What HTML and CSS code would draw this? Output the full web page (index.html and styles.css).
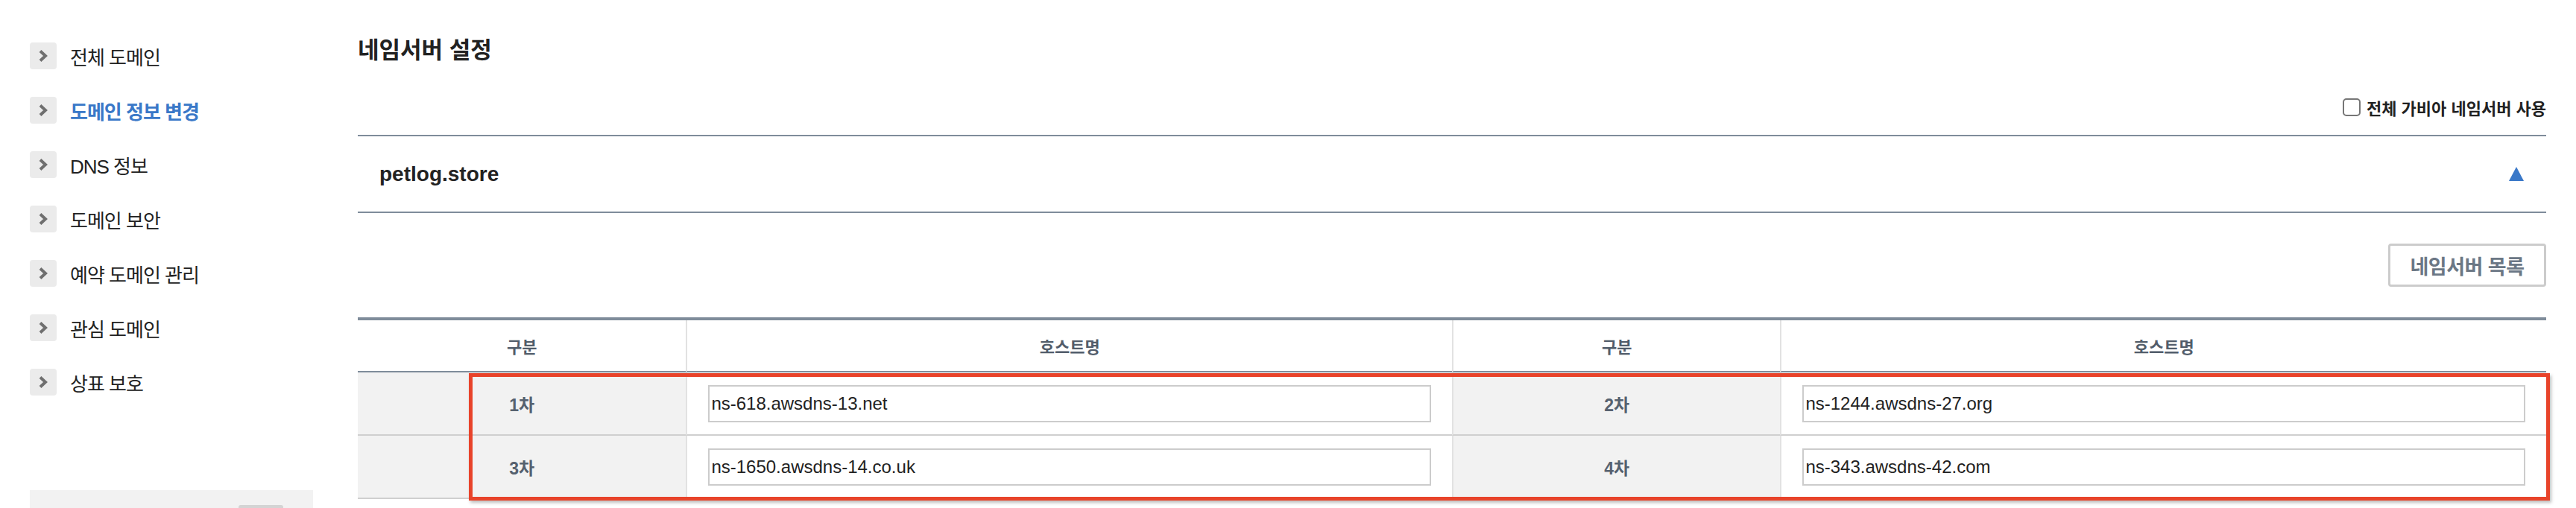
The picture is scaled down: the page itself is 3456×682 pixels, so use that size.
FILE: index.html
```html
<!DOCTYPE html>
<html lang="ko">
<head>
  <meta charset="UTF-8">
  <title>네임서버 설정</title>
  <link rel="stylesheet" href="styles.css">
</head>
<body>
  <div class="page">
    <aside class="sidebar">
      <ul class="menu">
        <li><span class="arrow"><svg width="36" height="36" viewBox="0 0 36 36"><path d="M14 11.5 L21 18 L14 24.5" /></svg></span>전체 도메인</li>
        <li class="active"><span class="arrow"><svg width="36" height="36" viewBox="0 0 36 36"><path d="M14 11.5 L21 18 L14 24.5" /></svg></span>도메인 정보 변경</li>
        <li><span class="arrow"><svg width="36" height="36" viewBox="0 0 36 36"><path d="M14 11.5 L21 18 L14 24.5" /></svg></span>DNS 정보</li>
        <li><span class="arrow"><svg width="36" height="36" viewBox="0 0 36 36"><path d="M14 11.5 L21 18 L14 24.5" /></svg></span>도메인 보안</li>
        <li><span class="arrow"><svg width="36" height="36" viewBox="0 0 36 36"><path d="M14 11.5 L21 18 L14 24.5" /></svg></span>예약 도메인 관리</li>
        <li><span class="arrow"><svg width="36" height="36" viewBox="0 0 36 36"><path d="M14 11.5 L21 18 L14 24.5" /></svg></span>관심 도메인</li>
        <li><span class="arrow"><svg width="36" height="36" viewBox="0 0 36 36"><path d="M14 11.5 L21 18 L14 24.5" /></svg></span>상표 보호</li>
      </ul>
      <div class="side-box"><span class="side-btn"></span></div>
    </aside>

    <main class="content">
      <h2>네임서버 설정</h2>

      <div class="option-row">
        <label class="all-ns"><input type="checkbox">전체 가비아 네임서버 사용</label>
      </div>

      <div class="domain-bar">
        <strong>petlog.store</strong>
        <svg class="toggle" width="20" height="19" viewBox="0 0 20 19"><polygon points="10,0 20,19 0,19" /></svg>
      </div>

      <div class="btn-row">
        <button type="button">네임서버 목록</button>
      </div>

      <div class="table-wrap">
        <table class="ns-table">
          <colgroup>
            <col class="col-label">
            <col class="col-host">
            <col class="col-label">
            <col class="col-host">
          </colgroup>
          <thead>
            <tr>
              <th>구분</th>
              <th>호스트명</th>
              <th>구분</th>
              <th>호스트명</th>
            </tr>
          </thead>
          <tbody>
            <tr>
              <td class="label">1차</td>
              <td><input type="text" value="ns-618.awsdns-13.net"></td>
              <td class="label">2차</td>
              <td><input type="text" value="ns-1244.awsdns-27.org"></td>
            </tr>
            <tr>
              <td class="label">3차</td>
              <td><input type="text" value="ns-1650.awsdns-14.co.uk"></td>
              <td class="label">4차</td>
              <td><input type="text" value="ns-343.awsdns-42.com"></td>
            </tr>
          </tbody>
        </table>
        <div class="highlight"></div>
      </div>
    </main>
  </div>
</body>
</html>
```

FILE: styles.css
```css
html, body {
  height: 682px;
  overflow: hidden;
}
body {
  margin: 0;
  font-family: "Liberation Sans", "Noto Sans CJK KR", sans-serif;
  color: #222;
  background: #fff;
}
.page {
  display: flex;
  gap: 60px;
  padding: 0 40px;
  height: 682px;
  overflow: hidden;
}

/* sidebar */
.sidebar {
  width: 380px;
  flex: none;
  padding-top: 57px;
}
.menu {
  list-style: none;
  margin: 0;
  padding: 0;
}
.menu li {
  display: flex;
  align-items: center;
  gap: 18px;
  height: 36px;
  margin-bottom: 37px;
  font-size: 26px;
  letter-spacing: -1px;
  color: #222;
}
.menu li:last-child {
  margin-bottom: 0;
}
.menu li.active {
  color: #3a78c8;
  font-weight: bold;
}
.arrow {
  width: 36px;
  height: 36px;
  border-radius: 4px;
  background: #ebebeb;
  flex: none;
}
.arrow svg {
  display: block;
}
.arrow path {
  fill: none;
  stroke: #6f6f6f;
  stroke-width: 4;
}
.side-box {
  margin-top: 127px;
  height: 24px;
  overflow: hidden;
  background: #f2f2f2;
  display: flex;
  justify-content: flex-end;
  align-items: flex-start;
  padding: 20px 40px 0 0;
  box-sizing: border-box;
}
.side-btn {
  width: 60px;
  height: 10px;
  background: #d4d4d4;
  border-radius: 3px 3px 0 0;
}

/* content */
.content {
  flex: 1;
  padding-top: 48px;
}
.content h2 {
  margin: 0;
  font-size: 31px;
  line-height: 40px;
  font-weight: bold;
  color: #222;
}
.option-row {
  display: flex;
  justify-content: flex-end;
  height: 24px;
  margin: 44px 0 25px;
}
.all-ns {
  display: flex;
  align-items: center;
  gap: 8px;
  font-size: 22px;
  font-weight: bold;
  color: #222;
}
.all-ns input {
  appearance: none;
  margin: 0;
  width: 24px;
  height: 24px;
  border: 2px solid #767676;
  border-radius: 5px;
  background: #fff;
}
.domain-bar {
  display: flex;
  align-items: center;
  justify-content: space-between;
  height: 101px;
  padding: 0 30px 0 29px;
  border-top: 2px solid #7f8c9a;
  border-bottom: 2px solid #7f8c9a;
}
.domain-bar strong {
  font-size: 28px;
  color: #222;
}
.toggle polygon {
  fill: #3a78c8;
}
.btn-row {
  display: flex;
  justify-content: flex-end;
  margin: 41px 0;
}
.btn-row button {
  width: 212px;
  height: 58px;
  background: #fff;
  border: 3px solid #cccccc;
  border-radius: 4px;
  font-family: inherit;
  font-size: 27px;
  font-weight: bold;
  color: #6b7785;
  letter-spacing: -0.5px;
}

/* table */
.table-wrap {
  position: relative;
}
.ns-table {
  width: 100%;
  table-layout: fixed;
  border-collapse: separate;
  border-spacing: 0;
  border-top: 4px solid #7f8c9a;
}
.col-label {
  width: 15%;
}
.ns-table th {
  height: 70px;
  padding: 0;
  font-size: 22px;
  font-weight: bold;
  color: #525d6b;
  border-bottom: 2px solid #7f8c9a;
  border-left: 2px solid #e2e2e2;
  box-sizing: border-box;
}
.ns-table td {
  height: 85px;
  padding: 0 28px;
  border-bottom: 2px solid #cfcfcf;
  border-left: 2px solid #e2e2e2;
  box-sizing: border-box;
}
.ns-table th:first-child,
.ns-table td:first-child {
  border-left: none;
}
.ns-table td.label {
  background: #f2f2f2;
  text-align: center;
  font-size: 23px;
  font-weight: bold;
  color: #56616f;
}
.ns-table input {
  display: block;
  width: 100%;
  height: 50px;
  margin: 0;
  padding: 0 2px;
  box-sizing: border-box;
  border: 2px solid #cccccc;
  font-family: "Liberation Sans", sans-serif;
  font-size: 24px;
  color: #222;
}
.highlight {
  position: absolute;
  left: 149px;
  top: 75px;
  width: 2792px;
  height: 171px;
  box-sizing: border-box;
  border: 5px solid #e8432a;
  box-shadow: 2px 3px 4px rgba(0, 0, 0, 0.25);
  pointer-events: none;
}
```
